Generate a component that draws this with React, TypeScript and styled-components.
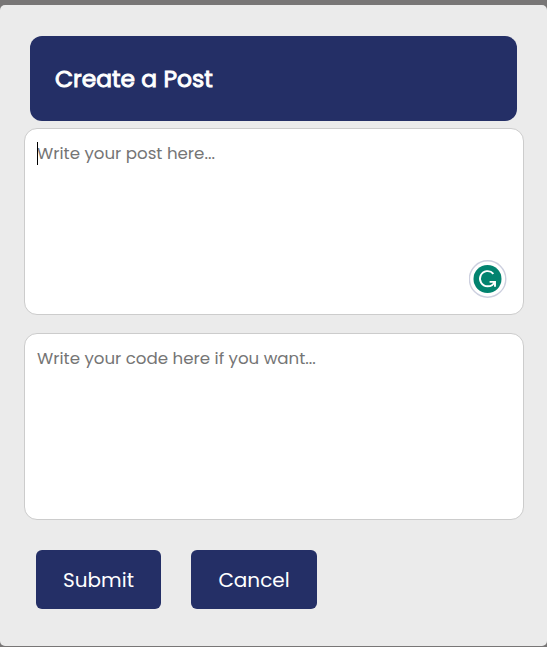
import React from "react";
import styled, { createGlobalStyle } from "styled-components";

const GlobalStyle = createGlobalStyle`
  * { box-sizing: border-box; }
  body { margin: 0; background: #787676; overflow: hidden; }
  body, textarea, button {
    font-family: Poppins, Inter, "Open Sans", sans-serif;
  }
`;

const Backdrop = styled.div`
  height: 647px;
  padding: 5px 0 1px;
  background: #787676;
`;

const Dialog = styled.form`
  display: flex;
  flex-direction: column;
  height: 641px;
  padding: 31px 23px 0 24px;
  border-radius: 5px;
  background: #ebebeb;
`;

const Header = styled.header`
  display: flex;
  align-items: center;
  height: 85px;
  margin: 0 7px 7px 6px;
  padding: 0 24px 0 25px;
  border-radius: 12px;
  background: #242f66;
`;

const Title = styled.h1`
  margin: 0;
  color: #fff;
  font-size: 23.4px;
  line-height: 35px;
  font-weight: 400;
  -webkit-text-stroke: 0.9px #fff;
  white-space: nowrap;
`;

const Field = styled.div`
  position: relative;
  height: 187px;
  margin-bottom: 18px;
`;

const TextArea = styled.textarea`
  display: block;
  width: 100%;
  height: 100%;
  padding: 12px;
  border: 1px solid #ccc;
  border-radius: 13px;
  outline: none;
  resize: none;
  background: #fff;
  font-size: 16.67px;
  line-height: 25px;
  &::placeholder { color: #757575; opacity: 1; }
`;

const Caret = styled.span`
  position: absolute;
  left: 13px;
  top: 14px;
  width: 1px;
  height: 23px;
  background: #000;
`;

const Assistant = styled.svg`
  position: absolute;
  right: 17px;
  top: 132px;
  width: 38px;
  height: 38px;
`;

const Actions = styled.div`
  display: flex;
  gap: 30px;
  margin: 12px 0 0 12px;
`;

const Button = styled.button<{ $width: number }>`
  width: ${(p) => p.$width}px;
  height: 59px;
  padding: 0;
  border: 0;
  border-radius: 6px;
  background: #242f66;
  color: #fff;
  font-size: 20px;
  line-height: 30px;
`;

export default function App() {
  return (
    <Backdrop>
      <GlobalStyle />
      <Dialog>
        <Header>
          <Title>Create a Post</Title>
        </Header>
        <Field>
          <TextArea placeholder="Write your post here..." />
          <Caret />
          <Assistant viewBox="0 0 38 38" fill="none" aria-label="Writing assistant">
            <circle cx="18.6" cy="19" r="18.2" fill="#fff" stroke="#cdd0df" strokeWidth="1.4" />
            <circle cx="18.5" cy="19" r="14" fill="#02836f" />
            <path d="M24.4 13.8A7.6 7.6 0 1 0 18.5 26.3C21.8 26.3 24.6 24.6 25.6 21.7" stroke="#fff" strokeWidth="1.9" />
            <path d="M20.6 21.9H26V26.8" stroke="#fff" strokeWidth="1.9" />
          </Assistant>
        </Field>
        <Field>
          <TextArea placeholder="Write your code here if you want..." />
        </Field>
        <Actions>
          <Button type="button" $width={125}>Submit</Button>
          <Button type="button" $width={126}>Cancel</Button>
        </Actions>
      </Dialog>
    </Backdrop>
  );
}
